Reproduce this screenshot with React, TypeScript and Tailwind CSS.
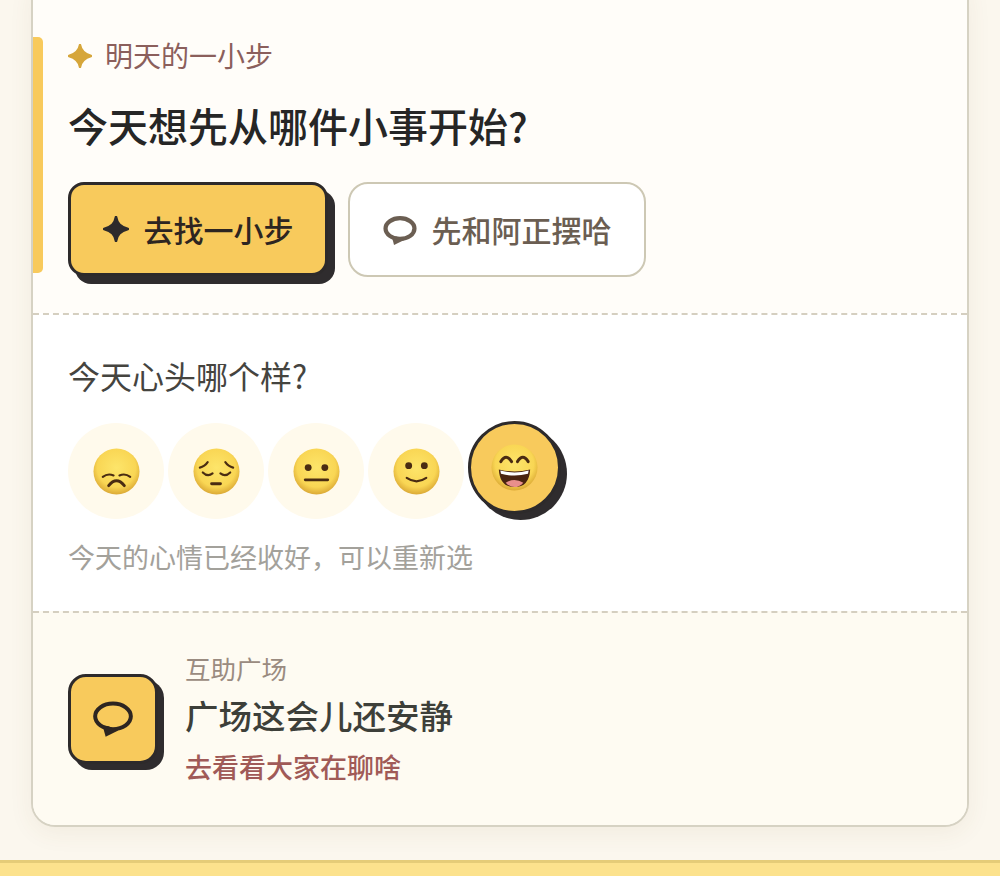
const font = { fontFamily: '"Noto Sans CJK SC","Liberation Sans",sans-serif' };

function Spark({ className }: { className: string }) {
  return (
    <svg viewBox="0 0 24 24" className={className} fill="currentColor">
      <path d="M12 1 C13 7 16 10 23 12 C16 14 13 17 12 23 C11 17 8 14 1 12 C8 10 11 7 12 1Z" stroke="currentColor" strokeWidth="2.4" strokeLinejoin="round" />
    </svg>
  );
}

function Bubble({ className, sw = 2.4 }: { className: string; sw?: number }) {
  return (
    <svg viewBox="0 0 40 36" className={className} fill="none" stroke="currentColor" strokeWidth={sw}>
      <ellipse cx="20" cy="14.5" rx="17" ry="12.2" />
      <path d="M10 23 L13 34 L25 28 L16 24 Z" fill="currentColor" stroke="none" />
    </svg>
  );
}

function Face({ children, id }: { children: React.ReactNode; id: string }) {
  return (
    <svg viewBox="0 0 48 48" className="w-[47px] h-[47px]">
      <defs>
        <radialGradient id={id} cx="50%" cy="42%" r="58%">
          <stop offset="0%" stopColor="#fde56a" />
          <stop offset="72%" stopColor="#f9d654" />
          <stop offset="100%" stopColor="#dba935" />
        </radialGradient>
      </defs>
      <circle cx="24" cy="24" r="23.5" fill={`url(#${id})`} />
      {children}
    </svg>
  );
}

const line = { stroke: '#4a2c12', strokeWidth: 2.2, strokeLinecap: 'round' as const, fill: 'none' };

const faces = [
  <Face id="f1" key="1">
    <path d="M10 29.5 Q15 25.5 21 28" {...line} />
    <path d="M38 29.5 Q33 25.5 27 28" {...line} />
    <path d="M16 38.5 Q24 28.5 32 38.5" {...line} strokeWidth={3} />
  </Face>,
  <Face id="f2" key="2">
    <path d="M7 20 Q12 19 15 14.5" {...line} />
    <path d="M41 20 Q36 19 33 14.5" {...line} />
    <path d="M10 25 Q15 30 20 26" {...line} />
    <path d="M38 25 Q33 30 28 26" {...line} />
    <path d="M19 36.5 H28" {...line} strokeWidth={3} />
  </Face>,
  <Face id="f3" key="3">
    <circle cx="15.5" cy="20" r="3.5" fill="#4a2c12" />
    <circle cx="32.5" cy="20" r="3.5" fill="#4a2c12" />
    <path d="M12.5 32.5 H35.5" {...line} strokeWidth={2.8} />
  </Face>,
  <Face id="f4" key="4">
    <circle cx="16" cy="18" r="3.5" fill="#4a2c12" />
    <circle cx="32" cy="18" r="3.5" fill="#4a2c12" />
    <path d="M14 30.5 Q24 37.5 34 30.5" {...line} />
  </Face>,
];

export default function App() {
  return (
    <div style={font} className="w-[1000px] h-[876px] overflow-hidden flex flex-col bg-[#fbf7ee]">
      <main className="h-[860px] px-[31px]">
        <div className="-mt-[24px] h-[851px] rounded-[24px] border-2 border-[#d6d2c3] bg-[#fffdf8] shadow-[0_6px_24px_rgba(120,90,40,0.07)] overflow-hidden flex flex-col">
          <section className="relative h-[335px] pt-[62px] pl-[35px] bg-[#fffdf9]">
            <div className="absolute left-0 top-[59px] w-[10px] h-[236px] rounded-r-[5px] bg-[#f8ca5c]" />
            <div className="flex items-center h-[30px] gap-[13px]">
              <Spark className="w-[24px] h-[24px] text-[#d6a63a] mt-[2px]" />
              <span className="text-[28px] leading-[30px] font-normal text-[#8b5f5c]">明天的一小步</span>
            </div>
            <h1 className="mt-[31px] text-[40px] leading-[48px] font-medium text-[#262626]">今天想先从哪件小事开始?</h1>
            <div className="mt-[33px] flex gap-[20px]">
              <button className="w-[260px] h-[94px] rounded-[16px] border-[3px] border-[#2d2a2b] bg-[#f8ca5c] shadow-[7px_8px_0_#2f2c2e] flex items-center justify-center gap-[15px] text-[#2d2521] text-[30px] font-medium">
                <Spark className="w-[26px] h-[26px] text-[#2d2a2b]" />
                <span>去找一小步</span>
              </button>
              <button className="w-[298px] h-[95px] rounded-[20px] border-[2.5px] border-[#cdc8b4] bg-white flex items-center justify-center gap-[15px] text-[#6b5e52] text-[30px] font-medium">
                <Bubble className="w-[34px] h-[31px] mt-[4px] text-[#6b5e52]" sw={5} />
                <span>先和阿正摆哈</span>
              </button>
            </div>
          </section>

          <section className="h-[298px] border-t-2 border-dashed border-[#d5cfc0] bg-white pl-[35px] pt-[40px]">
            <h2 className="text-[32px] leading-[40px] font-normal text-[#45443f]">今天心头哪个样?</h2>
            <div className="mt-[26px] flex gap-[4px] items-center h-[100px]">
              {faces.map((f) => (
                <div key={f.key} className="w-[96px] h-[96px] rounded-full bg-[#fffaec] flex items-center justify-center">{f}</div>
              ))}
              <div className="w-[93px] h-[93px] -mt-[8px] rounded-full border-[3px] border-[#2d2a2b] bg-[#f8ca5c] shadow-[6px_6px_0_#2f2c2e] flex items-center justify-center">
                <Face id="f5">
                  <path d="M10 18 Q15.5 9 21 18" {...line} strokeWidth={3} />
                  <path d="M27 18 Q32.5 9 38 18" {...line} strokeWidth={3} />
                  <path d="M8 26 Q24 30 40 26 Q39 44 24 44 Q9 44 8 26Z" fill="#4a2410" />
                  <path d="M9.5 27 Q24 31 38.5 27 L37.8 30.5 Q24 34 10.2 30.5Z" fill="#fff" />
                  <path d="M15 39.5 Q24 34 33 39.5 Q29 44 24 44 Q19 44 15 39.5Z" fill="#e98f8c" />
                </Face>
              </div>
            </div>
            <p className="mt-[19px] text-[27px] leading-[34px] font-normal text-[#a3a19b]">今天的心情已经收好，可以重新选</p>
          </section>

          <section className="flex-1 border-t-2 border-dashed border-[#d5cfc0] bg-[#fefbf2] pl-[35px] flex items-center gap-[27px] pb-[1px]">
            <div className="w-[90px] h-[90px] rounded-[18px] border-[3px] border-[#2d2a2b] bg-[#f8ca5c] shadow-[6px_6px_0_#2f2c2e] flex items-center justify-center">
              <Bubble className="w-[42px] h-[38px] mt-[2px] text-[#2d2521]" sw={3.8} />
            </div>
            <div className="flex flex-col">
              <span className="text-[25.5px] leading-[32px] font-normal text-[#9a8b80]">互助广场</span>
              <span className="mt-[9px] text-[33.5px] leading-[44px] font-medium text-[#3d3f39]">广场这会儿还安静</span>
              <span className="mt-[12px] text-[27px] leading-[36px] font-medium text-[#a05a57]">去看看大家在聊啥</span>
            </div>
          </section>
        </div>
      </main>
      <footer className="h-[16px] border-t-[3px] border-[#e5cc78] bg-[#fce28d]" />
    </div>
  );
}
